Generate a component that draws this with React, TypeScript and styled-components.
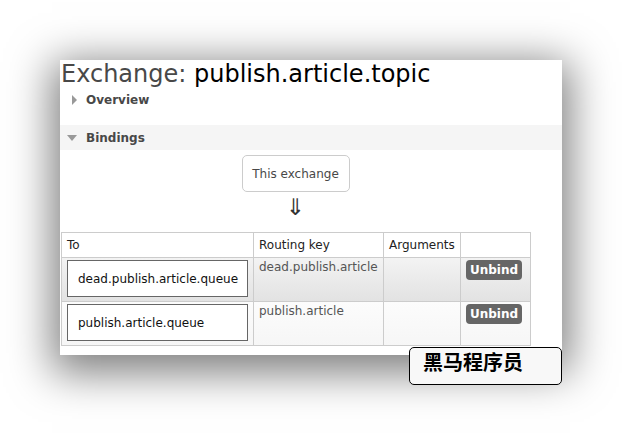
import React from "react"
import styled, { createGlobalStyle } from "styled-components"

const GlobalStyle = createGlobalStyle`
  html, body {
    margin: 0;
    padding: 0;
    background: #fff;
  }
  body {
    font-family: "DejaVu Sans", Verdana, sans-serif;
    color: #484848;
  }
`

const Page = styled.div`
  width: 622px;
  height: 446px;
  padding: 60px 0 0 60px;
  box-sizing: border-box;
  position: relative;
  overflow: hidden;
`

const Panel = styled.div`
  width: 502px;
  height: 295px;
  background: #fff;
  box-shadow: 0 10px 40px 8px rgba(0, 0, 0, 0.5);
  display: flex;
  flex-direction: column;
`

const Title = styled.h1`
  margin: 0 0 0 1px;
  font-size: 24px;
  font-weight: normal;
  line-height: 28px;
  color: #484848;
  white-space: nowrap;
`

const Name = styled.span`
  color: #000;
`

const Section = styled.div<{ $open?: boolean }>`
  display: flex;
  align-items: center;
  gap: 9px;
  height: ${(p) => (p.$open ? "25px" : "24px")};
  padding-left: ${(p) => (p.$open ? "7px" : "12px")};
  margin-top: ${(p) => (p.$open ? "13px" : "0")};
  background: ${(p) => (p.$open ? "#f5f5f5" : "transparent")};
  font-size: 12px;
  font-weight: bold;
  color: #484848;
`

const Arrow = styled.span<{ $open?: boolean }>`
  width: 0;
  height: 0;
  ${(p) =>
    p.$open
      ? `
    border-left: 5px solid transparent;
    border-right: 5px solid transparent;
    border-top: 6px solid #999;
    margin-right: 0;
  `
      : `
    border-top: 5px solid transparent;
    border-bottom: 5px solid transparent;
    border-left: 5px solid #999;
  `}
`

const Diagram = styled.div`
  display: flex;
  flex-direction: column;
  align-items: center;
  padding-top: 5px;
  width: 469px;
  margin-left: 1px;
`

const ExchangeBox = styled.div`
  width: 106px;
  height: 35px;
  border: 1px solid #ccc;
  border-radius: 5px;
  display: flex;
  align-items: center;
  justify-content: center;
  font-size: 12px;
  color: #484848;
`

const DownArrow = styled.div`
  font-size: 23px;
  line-height: 30px;
  height: 40px;
  color: #333;
`

const Table = styled.table`
  margin-left: 1px;
  border-collapse: collapse;
  width: 469px;
  font-size: 12px;
  table-layout: fixed;
`

const Th = styled.th<{ $w: number }>`
  width: ${(p) => p.$w}px;
  border: 1px solid #ccc;
  height: 25px;
  padding: 0 5px;
  text-align: left;
  font-weight: normal;
  color: #222;
  background: #fff;
  box-sizing: border-box;
`

const Row = styled.tr<{ $alt?: boolean }>`
  background: ${(p) =>
    p.$alt ? "linear-gradient(#fcfcfc, #f6f6f6)" : "linear-gradient(#f3f3f3, #e2e2e2)"};
`

const Td = styled.td`
  border: 1px solid #ccc;
  height: 44px;
  padding: 2px 5px;
  vertical-align: top;
  color: #555;
  box-sizing: border-box;
`

const QueueBox = styled.div`
  width: 181px;
  height: 37px;
  box-sizing: border-box;
  border: 1px solid #666;
  background: #fff;
  padding-left: 10px;
  display: flex;
  align-items: center;
  color: #111;
  white-space: nowrap;
`

const KeyText = styled.div`
  padding-top: 0;
`

const Button = styled.button`
  width: 56px;
  height: 20px;
  border: none;
  border-radius: 4px;
  background: #666;
  color: #fff;
  font-family: "DejaVu Sans", Verdana, sans-serif;
  font-size: 12px;
  font-weight: bold;
  padding: 0;
`

const Watermark = styled.div`
  position: absolute;
  left: 409px;
  top: 347px;
  width: 138px;
  height: 36px;
  border: 1px solid #000;
  border-radius: 5px;
  background: #f8f8f8;
  padding-left: 13px;
  font-family: "Noto Sans CJK SC", sans-serif;
  font-size: 20px;
  font-weight: bold;
  line-height: 28px;
  color: #000;
`

const bindings = [
  { queue: "dead.publish.article.queue", key: "dead.publish.article" },
  { queue: "publish.article.queue", key: "publish.article" },
]

const App: React.FC = () => {
  return (
    <>
      <GlobalStyle />
      <Page>
        <Panel>
          <Title>
            Exchange: <Name>publish.article.topic</Name>
          </Title>
          <Section>
            <Arrow />
            Overview
          </Section>
          <Section $open>
            <Arrow $open />
            Bindings
          </Section>
          <Diagram>
            <ExchangeBox>This exchange</ExchangeBox>
            <DownArrow>⇓</DownArrow>
          </Diagram>
          <Table>
            <thead>
              <tr>
                <Th $w={192}>To</Th>
                <Th $w={130}>Routing key</Th>
                <Th $w={77}>Arguments</Th>
                <Th $w={70}></Th>
              </tr>
            </thead>
            <tbody>
              {bindings.map((b, i) => (
                <Row key={b.queue} $alt={i === 1}>
                  <Td>
                    <QueueBox>{b.queue}</QueueBox>
                  </Td>
                  <Td>
                    <KeyText>{b.key}</KeyText>
                  </Td>
                  <Td></Td>
                  <Td>
                    <Button>Unbind</Button>
                  </Td>
                </Row>
              ))}
            </tbody>
          </Table>
        </Panel>
        <Watermark>黑马程序员</Watermark>
      </Page>
    </>
  )
}

export default App
